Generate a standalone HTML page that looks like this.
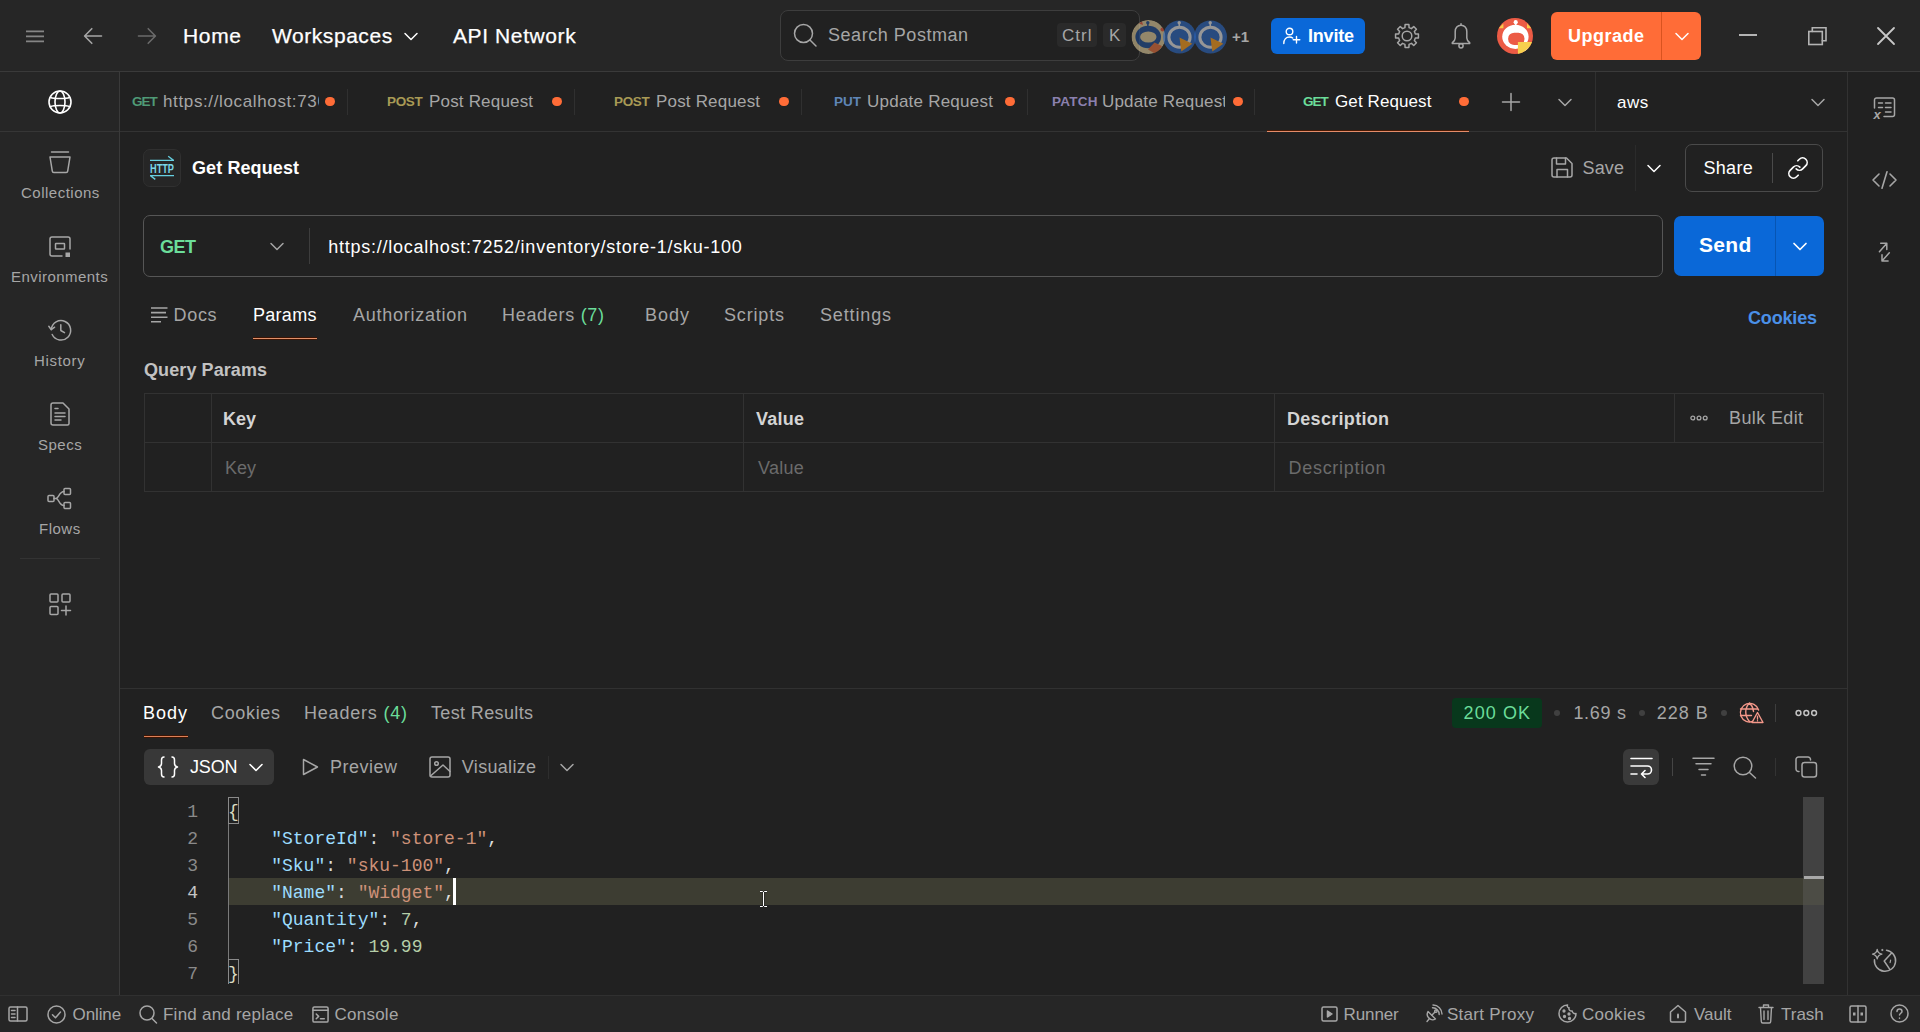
<!DOCTYPE html>
<html lang="en">
<head>
<meta charset="utf-8">
<title>Postman - Get Request</title>
<style>
*{box-sizing:border-box;margin:0;padding:0}
html,body{width:1920px;height:1032px;overflow:hidden;background:#212121}
body{position:relative;font-family:"Liberation Sans",Arial,sans-serif;font-size:18px;color:#a6a6a6;-webkit-font-smoothing:antialiased}
.abs,.t,.ic,.box,.ln{position:absolute}
.t{white-space:nowrap;line-height:24px;height:24px}
.w{color:#fff}
.b{font-weight:700}
.g{color:#a6a6a6}
.ic{display:block;overflow:visible}
svg{fill:none;stroke:#a6a6a6;stroke-width:1.5;stroke-linecap:round;stroke-linejoin:round}
.ln{background:#353535}
#topbar{left:0;top:0;width:1920px;height:72px;background:#262626;border-bottom:1px solid #3a3a3a}
#sidebar{left:0;top:72px;width:120px;height:923px;background:#262626;border-right:1px solid #3a3a3a}
#tabbar{left:120px;top:72px;width:1727px;height:60px;background:#212121;border-bottom:1px solid #333}
#rightbar{left:1847px;top:72px;width:73px;height:923px;background:#212121;border-left:1px solid #323232}
#statusbar{left:0;top:995px;width:1920px;height:37px;background:#262626;border-top:1px solid #303030}
#main{left:120px;top:132px;width:1727px;height:863px;background:#212121}
.dot{position:absolute;width:9.6px;height:9.6px;border-radius:50%;background:#ff6c37}
.tabsep{position:absolute;top:89px;width:1px;height:26px;background:#303030}
.mono{transform:translateY(1.6px);font-family:"Liberation Mono","DejaVu Sans Mono",monospace;font-size:18px;line-height:27px;height:27px;white-space:pre;position:absolute}
.key{color:#9cdcfe}.str{color:#ce9178}.num{color:#b5cea8}.pun{color:#dcdcdc}
.lnum{transform:translateY(1.6px);position:absolute;width:60px;text-align:right;font-family:"Liberation Mono","DejaVu Sans Mono",monospace;font-size:18px;line-height:27px;color:#8a8a8a}
</style>
</head>
<body>
<!-- ================= TOP BAR ================= -->
<header id="topbar" class="abs">
  <svg class="ic" style="left:26px;top:28px;stroke:#858585;stroke-width:1.6" width="18" height="16" viewBox="0 0 18 16"><path d="M0 3.4h18M0 8.4h18M0 13.4h18" stroke-linecap="butt"/></svg>
  <svg class="ic" style="left:83px;top:27px;stroke:#a6a6a6;stroke-width:1.6" width="20" height="18" viewBox="0 0 20 18"><path d="M18.500 9H2M8.800 1.700L1.600 9l7.200 7.300"/></svg>
  <svg class="ic" style="left:137px;top:27px;stroke:#6b6b6b;stroke-width:1.6" width="20" height="18" viewBox="0 0 20 18"><path d="M1.500 9H18M11.200 1.700L18.400 9l-7.200 7.300"/></svg>
  <span class="t w" id="home" style="left:183px;top:24px;font-size:21px;letter-spacing:0.667px;-webkit-text-stroke:0.25px #fff">Home</span>
  <span class="t w" id="workspaces" style="left:272px;top:24px;font-size:21px;letter-spacing:0.556px;-webkit-text-stroke:0.25px #fff">Workspaces</span>
  <svg class="ic" style="left:404px;top:32px;stroke:#fff" width="14" height="9" viewBox="0 0 14 9"><path d="M1 1.5l6 6 6-6"/></svg>
  <span class="t w" id="apinet" style="left:453px;top:24px;font-size:21px;letter-spacing:0.6px;-webkit-text-stroke:0.25px #fff">API Network</span>

  <div class="box" id="search" style="left:780px;top:10px;width:360px;height:51px;border:1px solid #3d3d3d;border-radius:8px;background:#212121"></div>
  <svg class="ic" style="left:793px;top:23px;stroke:#a6a6a6" width="24" height="24" viewBox="0 0 24 24"><circle cx="10.5" cy="10.5" r="9"/><path d="M17 17l6 6"/></svg>
  <span class="t g" id="searchtxt" style="left:828px;top:23px;letter-spacing:0.538px">Search Postman</span>
  <div class="box" style="left:1057px;top:23px;width:40px;height:24px;border-radius:4px;background:#2a2a2a"></div>
  <span class="t g" id="ctrl" style="left:1062px;top:24px;font-size:17px;letter-spacing:1px">Ctrl</span>
  <div class="box" style="left:1103px;top:23px;width:23px;height:24px;border-radius:4px;background:#2a2a2a"></div>
  <span class="t g" id="kk" style="left:1109px;top:24px;font-size:17px">K</span>

  <!-- team avatars -->
  <svg class="ic" style="left:1131px;top:19px;stroke:none" width="98" height="36" viewBox="0 0 98 36">
    <defs><clipPath id="tav1"><circle cx="17.500" cy="18" r="17"/></clipPath></defs>
    <g opacity="0.58" clip-path="url(#tav1)">
      <circle cx="17.500" cy="18" r="17" fill="#e2cd9c"/>
      <path d="M8 4.500l3-2 1 3.500z" fill="#e8573c"/><circle cx="31.500" cy="10.500" r="2" fill="#e8573c"/>
      <ellipse cx="17.200" cy="18" rx="12.800" ry="11.300" fill="#1f4f96"/>
      <ellipse cx="17.300" cy="18" rx="8.200" ry="5.600" fill="#e2cd9c"/>
      <rect x="16.100" y="3.500" width="1.500" height="4" fill="#1f4f96"/><circle cx="16.800" cy="3.700" r="1.700" fill="#1f4f96"/>
      <path d="M23.500 23.500l7.500 3.500-5.500 8.500-8.500-5z" fill="#e8703c"/>
    </g>
    <g opacity="0.58">
      <circle cx="48.500" cy="18" r="16.500" fill="#2b66c0"/>
      <ellipse cx="48.500" cy="18.200" rx="10.600" ry="10" fill="none" stroke="#e8e8e8" stroke-width="3"/>
      <rect x="47.500" y="4" width="1.500" height="4" fill="#e8e8e8"/><circle cx="48.200" cy="3.800" r="1.700" fill="#e8e8e8"/>
      <path d="M48.500 18.600l12.800 6.200-11 7.700z" fill="#ff9f1c"/>
    </g>
    <g opacity="0.58">
      <circle cx="79.500" cy="18" r="16.500" fill="#2b66c0"/>
      <ellipse cx="79.500" cy="18.200" rx="10.600" ry="10" fill="none" stroke="#e8e8e8" stroke-width="3"/>
      <rect x="78.500" y="4" width="1.500" height="4" fill="#e8e8e8"/><circle cx="79.200" cy="3.800" r="1.700" fill="#e8e8e8"/>
      <path d="M79.500 18.600l12.800 6.200-11 7.700z" fill="#ff9f1c"/>
    </g>
  </svg>
  <span class="t b" id="plus1" style="left:1232px;top:25px;font-size:15px;color:#a6a6a6">+1</span>

  <div class="box" id="invite" style="left:1271px;top:18px;width:94px;height:36px;border-radius:6px;background:#0a68d8"></div>
  <svg class="ic" style="left:1283px;top:27px;stroke:#fff;stroke-width:1.4" width="18" height="18" viewBox="0 0 18 18"><circle cx="6.5" cy="4.5" r="3.3"/><path d="M0.8 16.5c0-4 2.4-6.5 5.7-6.5 1.2 0 2.3.3 3.2 1M13.5 9.5v6.5M10.2 12.8h6.6"/></svg>
  <span class="t w b" id="invitetxt" style="left:1308px;top:24px;letter-spacing:-0.2px">Invite</span>

  <!-- settings -->
  <svg class="ic" style="left:1394px;top:23px;stroke:#a6a6a6;stroke-width:1.5" width="26" height="26" viewBox="0 0 26 26"><circle cx="13" cy="13" r="4.800"/><path d="M10.93 4.65 L11.10 1.56 L14.90 1.56 L15.07 4.65 L17.44 5.63 L19.74 3.56 L22.44 6.26 L20.37 8.56 L21.35 10.93 L24.44 11.10 L24.44 14.90 L21.35 15.07 L20.37 17.44 L22.44 19.74 L19.74 22.44 L17.44 20.37 L15.07 21.35 L14.90 24.44 L11.10 24.44 L10.93 21.35 L8.56 20.37 L6.26 22.44 L3.56 19.74 L5.63 17.44 L4.65 15.07 L1.56 14.90 L1.56 11.10 L4.65 10.93 L5.63 8.56 L3.56 6.26 L6.26 3.56 L8.56 5.63Z"/></svg>
  <!-- bell -->
  <svg class="ic" style="left:1450px;top:23px;stroke:#a6a6a6;stroke-width:1.5" width="22" height="26" viewBox="0 0 22 26"><path d="M11 2.300c-3.600 0-5.800 2.600-5.800 6.200v6.500c0 1.600-1.200 3.200-2.800 4.600a.5.500 0 00.300.9h16.600a.5.500 0 00.300-.9c-1.600-1.400-2.800-3-2.800-4.600V8.500c0-3.600-2.200-6.200-5.800-6.200z"/><circle cx="11" cy="22.800" r="2.100"/><path d="M11 0.800v1.500"/></svg>
  <!-- user avatar -->
  <svg class="ic" style="left:1497px;top:18px;stroke:none" width="36" height="36" viewBox="0 0 36 36">
    <defs><clipPath id="avc"><circle cx="18" cy="18" r="18"/></clipPath></defs>
    <g clip-path="url(#avc)">
      <rect width="36" height="36" fill="#ec5b45"/>
      <path d="M1.500 10.200L6.400 5.400V10.200z" fill="#f7c948"/><path d="M30 5.600l4.600 4.600H30z" fill="#f7c948"/>
      <ellipse cx="18.400" cy="18.800" rx="13.200" ry="12.100" fill="#fff"/>
      <rect x="17.900" y="4" width="1.600" height="4" fill="#fff"/>
      <circle cx="18.700" cy="4.200" r="2.100" fill="#fff"/>
      <rect x="11.200" y="14.700" width="16.200" height="12.200" rx="6" ry="5.500" fill="#ec5b45"/>
      <rect x="20.900" y="24" width="16" height="13" fill="#f7d04e"/>
      <path d="M36 26L24 36h12z" fill="#fbe9a6"/>
    </g>
  </svg>
  <!-- upgrade -->
  <div class="box" id="upgrade" style="left:1551px;top:12px;width:150px;height:48px;border-radius:6px;background:#ff6c37"></div>
  <div class="ln" style="left:1661px;top:12px;width:1px;height:48px;background:#d9531f"></div>
  <span class="t w b" id="upgradetxt" style="left:1568px;top:24px;letter-spacing:0.5px">Upgrade</span>
  <svg class="ic" style="left:1675px;top:32px;stroke:#fff" width="14" height="9" viewBox="0 0 14 9"><path d="M1 1.500l6 6 6-6"/></svg>
  <!-- window controls -->
  <div class="ln" style="left:1739px;top:34px;width:18px;height:2px;background:#b4b4b4"></div>
  <svg class="ic" style="left:1807px;top:26px;stroke:#b4b4b4;stroke-width:1.600;stroke-linejoin:miter" width="20" height="20" viewBox="0 0 20 20"><rect x="1.800" y="5.500" width="13.500" height="13"/><path d="M5.300 5.500V1.800H19v13h-3.700"/></svg>
  <svg class="ic" style="left:1877px;top:27px;stroke:#c8c8c8;stroke-width:1.800" width="18" height="18" viewBox="0 0 18 18"><path d="M1 1l16 16M17 1L1 17"/></svg>
</header>
<!-- ================= LEFT SIDEBAR ================= -->
<nav id="sidebar" class="abs"></nav>
<div class="ln" style="left:0;top:131px;width:119px;height:1px;background:#363636"></div>
<!-- workspace globe -->
<svg class="ic" style="left:48px;top:90px;stroke:#fff;stroke-width:1.600" width="24" height="24" viewBox="0 0 24 24"><circle cx="12" cy="12" r="11"/><ellipse cx="12" cy="12" rx="5" ry="11"/><path d="M2.500 7.500c3 1.400 16 1.400 19 0M2.500 16.500c3-1.400 16-1.400 19 0"/></svg>
<!-- collections -->
<svg class="ic" style="left:49px;top:150px" width="22" height="24" viewBox="0 0 22 24"><path d="M2.500 2h17M1 7h20l-2.300 14.200a1.500 1.500 0 01-1.500 1.300H4.800a1.500 1.500 0 01-1.500-1.300z"/></svg>
<span class="t g" id="sbcoll" style="left:21px;top:181px;font-size:15px;letter-spacing:0.5px">Collections</span>
<!-- environments -->
<svg class="ic" style="left:49px;top:236px" width="22" height="22" viewBox="0 0 22 22"><path d="M13 20H3a2 2 0 01-2-2V3a2 2 0 012-2h16a2 2 0 012 2v10"/><rect x="6.500" y="7.500" width="9" height="5.500" rx="0.500"/><rect x="16.500" y="16.500" width="4.500" height="4.500" fill="#a6a6a6" stroke="none"/></svg>
<span class="t g" id="sbenv" style="left:11px;top:265px;font-size:15px;letter-spacing:0.455px">Environments</span>
<!-- history -->
<svg class="ic" style="left:48px;top:318px" width="24" height="24" viewBox="0 0 24 24"><path d="M3.300 11.500a9.700 9.700 0 11.900 5"/><path d="M.800 8.300l2.500 3.400 3.300-2.500"/><path d="M12.800 6.800v5.700l3.700 2.200"/></svg>
<span class="t g" id="sbhist" style="left:34px;top:349px;font-size:15px;letter-spacing:0.667px">History</span>
<!-- specs -->
<svg class="ic" style="left:50px;top:402px" width="20" height="24" viewBox="0 0 20 24"><path d="M3 1h10l6 6v14.500a1.500 1.500 0 01-1.500 1.500H3a2 2 0 01-2-2V3a2 2 0 012-2z"/><path d="M5 6.500h3M5 11h10M5 14.500h10M5 18h6"/></svg>
<span class="t g" id="sbspecs" style="left:38px;top:433px;font-size:15px;letter-spacing:0.5px">Specs</span>
<!-- flows -->
<svg class="ic" style="left:47px;top:487px" width="25" height="23" viewBox="0 0 25 23"><rect x="1" y="8.500" width="6" height="6" rx="1"/><rect x="17" y="1.500" width="6.500" height="6" rx="1"/><rect x="17" y="15.500" width="6.500" height="6" rx="1"/><path d="M7 11.500h2c3 0 3-7 8-7M9 11.500c3 0 3 7 8 7"/></svg>
<span class="t g" id="sbflows" style="left:39px;top:517px;font-size:15px;letter-spacing:0.5px">Flows</span>
<div class="ln" style="left:20px;top:558px;width:80px;height:1px;background:#333"></div>
<!-- add apps -->
<svg class="ic" style="left:49px;top:593px" width="23" height="23" viewBox="0 0 23 23"><rect x="1" y="1" width="8" height="8" rx="1"/><rect x="13" y="1" width="8" height="8" rx="1"/><rect x="1" y="13.500" width="8" height="8" rx="1"/><path d="M17 13v9M12.500 17.500h9"/></svg>

<!-- ================= TAB BAR ================= -->
<div id="tabbar" class="abs"></div>
<span class="t b" id="t1m" style="left:132px;top:90px;font-size:13.500px;color:#4f9a76;letter-spacing:-1px">GET</span>
<span class="t" id="t1n" style="left:163px;top:90px;font-size:17px;color:#a6a6a6;width:156px;overflow:hidden;letter-spacing:0.632px">https://localhost:7308</span>
<div class="dot" style="left:325px;top:96.600px"></div>
<div class="tabsep" style="left:347px"></div>

<span class="t b" id="t2m" style="left:387px;top:90px;font-size:13.500px;color:#a89a55;letter-spacing:-0.333px">POST</span>
<span class="t" id="t2n" style="left:429px;top:90px;font-size:17px;color:#a6a6a6;letter-spacing:0.182px">Post Request</span>
<div class="dot" style="left:552px;top:96.600px"></div>
<div class="tabsep" style="left:574px"></div>

<span class="t b" id="t3m" style="left:614px;top:90px;font-size:13.500px;color:#a89a55;letter-spacing:-0.333px">POST</span>
<span class="t" id="t3n" style="left:656px;top:90px;font-size:17px;color:#a6a6a6;letter-spacing:0.182px">Post Request</span>
<div class="dot" style="left:779px;top:96.600px"></div>
<div class="tabsep" style="left:801px"></div>

<span class="t b" id="t4m" style="left:834px;top:90px;font-size:13.500px;color:#5f86b8;letter-spacing:0px">PUT</span>
<span class="t" id="t4n" style="left:867px;top:90px;font-size:17px;color:#a6a6a6;letter-spacing:0.231px">Update Request</span>
<div class="dot" style="left:1005px;top:96.600px"></div>
<div class="tabsep" style="left:1027px"></div>

<span class="t b" id="t5m" style="left:1052px;top:90px;font-size:13.500px;color:#8b80ae;letter-spacing:0.25px">PATCH</span>
<span class="t" id="t5n" style="left:1102px;top:90px;font-size:17px;color:#a6a6a6;width:123px;overflow:hidden;letter-spacing:0.167px">Update Request</span>
<div class="dot" style="left:1233px;top:96.600px"></div>
<div class="tabsep" style="left:1254px"></div>

<span class="t b" id="t6m" style="left:1303px;top:90px;font-size:13.500px;color:#6bdd9a;letter-spacing:-1px">GET</span>
<span class="t w" id="t6n" style="left:1335px;top:90px;font-size:17px;letter-spacing:0.1px">Get Request</span>
<div class="dot" style="left:1459px;top:96.600px"></div>
<div class="ln" style="left:1267px;top:130px;width:202px;height:1px;background:#4a1a04"></div>
<div class="ln" style="left:1267px;top:131px;width:202px;height:1px;background:#e58c69"></div>

<svg class="ic" style="left:1502px;top:93px;stroke:#a6a6a6" width="18" height="18" viewBox="0 0 18 18"><path d="M9 0.500v17M0.500 9h17"/></svg>
<svg class="ic" style="left:1558px;top:98px;stroke:#a6a6a6" width="14" height="9" viewBox="0 0 14 9"><path d="M1 1.500l6 6 6-6"/></svg>
<div class="ln" style="left:1595px;top:72px;width:1px;height:60px;background:#303030"></div>
<span class="t w" id="aws" style="left:1617px;top:91px;font-size:17px;letter-spacing:0.5px">aws</span>
<svg class="ic" style="left:1811px;top:98px;stroke:#a6a6a6" width="14" height="9" viewBox="0 0 14 9"><path d="M1 1.500l6 6 6-6"/></svg>

<!-- ================= RIGHT SIDEBAR ================= -->
<aside id="rightbar" class="abs"></aside>
<svg class="ic" style="left:1873px;top:97px;stroke:#a6a6a6" width="23" height="24" viewBox="0 0 23 24"><path d="M1.500 11V3a2 2 0 012-2h16a2 2 0 012 2v14.500a2 2 0 01-2 2H11"/><path d="M5.500 6h4M12.500 6h5.500M5.500 10.500h4M12.500 10.500h5.500M12.500 15h5.500"/><text x="0.500" y="21.500" font-family="Liberation Sans, Arial, sans-serif" font-size="13" font-style="italic" font-weight="700" fill="#a6a6a6" stroke="none">x</text></svg>
<svg class="ic" style="left:1872px;top:171px;stroke:#a6a6a6;stroke-width:1.600" width="25" height="18" viewBox="0 0 25 18"><path d="M7 3L1 9l6 6M18 3l6 6-6 6M15 0.800l-5 16.400"/></svg>
<svg class="ic" style="left:1875px;top:240px;stroke:#a6a6a6;stroke-width:1.500" width="19" height="24" viewBox="0 0 19 24"><path d="M4.400 11.800L11.700 3.500M5.700 3.300h6.100v6.100"/><path d="M14.300 12.800L7 21M7 14.800v6.100h6.100"/></svg>
<svg class="ic" style="left:1873px;top:948px;stroke:#a6a6a6;stroke-width:1.500" width="24" height="24" viewBox="0 0 24 24"><path d="M13.48 2.20A10.6 10.6 0 1 1 1.44 11.78"/><path d="M4.200 1.300Q4.900 5.400 8.900 6.100Q4.900 6.800 4.200 10.900Q3.500 6.800-.500 6.100Q3.500 5.400 4.200 1.300Z" stroke-width="1.300"/><path d="M9.300 1.300v1.400M8.600 2h1.400" stroke-width="1"/><path d="M18.400 5.300L11.200 13l5.600 8.300"/><path d="M17.600 12.200l-.500 2.400" stroke-width="1.200"/></svg>
<!-- ================= MAIN: REQUEST ================= -->
<main id="main" class="abs"></main>
<div class="box" style="left:143px;top:149px;width:38px;height:38px;border-radius:7px;background:#262626;border:1px solid #303030"></div>
<svg class="ic" style="left:149px;top:155px;stroke:#66cfe0;stroke-width:1.400;stroke-linecap:butt" width="26" height="26" viewBox="0 0 26 26">
  <path d="M1 5.400h24M19.200 1.300l5.300 4"/>
  <path d="M25 20.600H1M6.300 24.400L1.500 20.700"/>
  <text x="13" y="17.600" text-anchor="middle" font-family="Liberation Sans, Arial, sans-serif" font-size="12.500" font-weight="700" textLength="24" lengthAdjust="spacingAndGlyphs" fill="#7ad6e6" stroke="none">HTTP</text>
</svg>
<span class="t w b" id="reqname" style="left:192px;top:156px;letter-spacing:0.1px">Get Request</span>

<svg class="ic" style="left:1551px;top:157px;stroke:#a6a6a6;stroke-width:1.500" width="22" height="21" viewBox="0 0 22 21"><path d="M1 3a2 2 0 012-2h12.500l5.500 5.500V18a2 2 0 01-2 2H3a2 2 0 01-2-2z"/><path d="M5.500 1v6h9V1M6 20v-7.500h10.500V20"/></svg>
<span class="t g" id="save" style="left:1582.5px;top:156px;letter-spacing:0.167px">Save</span>
<div class="ln" style="left:1635px;top:145px;width:1px;height:46px;background:#2b2b2b"></div>
<svg class="ic" style="left:1647px;top:164px;stroke:#fff" width="14" height="9" viewBox="0 0 14 9"><path d="M1 1.500l6 6 6-6"/></svg>
<div class="box" style="left:1685px;top:144px;width:138px;height:48px;border:1px solid #4a4a4a;border-radius:7px"></div>
<span class="t w" id="share" style="left:1703.5px;top:156px;letter-spacing:0.3px">Share</span>
<div class="ln" style="left:1772px;top:153px;width:1px;height:30px;background:#4a4a4a"></div>
<svg class="ic" style="left:1787px;top:157px;stroke:#fff;stroke-width:1.800" width="22" height="22" viewBox="0 0 24 24"><path d="M10 13a5 5 0 007.070 0l3.500-3.500a5 5 0 00-7.070-7.070l-1.700 1.700"/><path d="M14 11a5 5 0 00-7.070 0l-3.500 3.500a5 5 0 007.070 7.070l1.700-1.700"/></svg>

<!-- URL bar -->
<div class="box" style="left:143px;top:215px;width:1520px;height:62px;border:1px solid #565656;border-radius:7px;background:#212121"></div>
<span class="t b" id="method" style="left:160px;top:235px;color:#6bdd9a;letter-spacing:-0.5px">GET</span>
<svg class="ic" style="left:270px;top:242px;stroke:#a6a6a6" width="14" height="9" viewBox="0 0 14 9"><path d="M1 1.500l6 6 6-6"/></svg>
<div class="ln" style="left:309px;top:228px;width:1px;height:36px;background:#3d3d3d"></div>
<span class="t w" id="url" style="left:328.2px;top:235px;letter-spacing:0.753px">https://localhost:7252/inventory/store-1/sku-100</span>
<div class="box" style="left:1674px;top:216px;width:150px;height:60px;border-radius:7px;background:#0a68d8"></div>
<div class="ln" style="left:1775px;top:216px;width:1px;height:60px;background:#0755b3"></div>
<span class="t w b" id="send" style="left:1699px;top:233px;font-size:21px;letter-spacing:0.333px">Send</span>
<svg class="ic" style="left:1793px;top:242px;stroke:#fff;stroke-width:1.700" width="14" height="9" viewBox="0 0 14 9"><path d="M1 1.500l6 6 6-6"/></svg>

<!-- request tabs -->
<svg class="ic" style="left:151px;top:307px;stroke:#a6a6a6;stroke-width:1.600;stroke-linecap:butt" width="17" height="16" viewBox="0 0 17 16"><path d="M0 1h16.500M0 5.600h15M0 10.200h16.500M0 14.800h10"/></svg>
<span class="t g" id="docs" style="left:173.6px;top:303px;letter-spacing:0.667px">Docs</span>
<span class="t w" id="params" style="left:253px;top:303px;letter-spacing:0.28px">Params</span>
<div class="ln" style="left:253px;top:337px;width:64px;height:3px;background:#3d1504"></div><div class="ln" style="left:253px;top:338px;width:64px;height:1px;background:#e0906a"></div>
<span class="t g" id="auth" style="left:353px;top:303px;letter-spacing:0.75px">Authorization</span>
<span class="t g" id="hdrs" style="left:502px;top:303px;letter-spacing:0.7px">Headers <span style="color:#6bdd9a">(7)</span></span>
<span class="t g" id="body" style="left:645px;top:303px;letter-spacing:1px">Body</span>
<span class="t g" id="scripts" style="left:724px;top:303px;letter-spacing:0.833px">Scripts</span>
<span class="t g" id="settings" style="left:820px;top:303px;letter-spacing:0.857px">Settings</span>
<span class="t b" id="cookieslink" style="left:1748px;top:306px;color:#4a90e8;letter-spacing:-0.167px">Cookies</span>

<span class="t b" id="qp" style="left:144px;top:358px;color:#c2c2c2;letter-spacing:0.091px">Query Params</span>

<!-- params table -->
<div class="box" id="ptable" style="left:144px;top:393px;width:1680px;height:99px;border:1px solid #323232"></div>
<div class="ln" style="left:144px;top:442px;width:1680px;height:1px;background:#323232"></div>
<div class="ln" style="left:211px;top:393px;width:1px;height:99px;background:#323232"></div>
<div class="ln" style="left:743px;top:393px;width:1px;height:99px;background:#323232"></div>
<div class="ln" style="left:1274px;top:393px;width:1px;height:99px;background:#323232"></div>
<div class="ln" style="left:1674px;top:393px;width:1px;height:49px;background:#323232"></div>
<span class="t b" id="thkey" style="left:223px;top:407px;color:#d4d4d4;letter-spacing:0px">Key</span>
<span class="t b" id="thval" style="left:756px;top:407px;color:#d4d4d4;letter-spacing:0.25px">Value</span>
<span class="t b" id="thdesc" style="left:1287px;top:407px;color:#d4d4d4;letter-spacing:0.3px">Description</span>
<svg class="ic" style="left:1690px;top:415px;stroke:#a6a6a6;stroke-width:1.300" width="18" height="6" viewBox="0 0 18 6"><circle cx="2.800" cy="3" r="1.900"/><circle cx="9" cy="3" r="1.900"/><circle cx="15.200" cy="3" r="1.900"/></svg>
<span class="t g" id="bulk" style="left:1729px;top:406px;letter-spacing:0.375px">Bulk Edit</span>
<span class="t" id="phkey" style="left:225px;top:456px;color:#6b6b6b;letter-spacing:0px">Key</span>
<span class="t" id="phval" style="left:758px;top:456px;color:#6b6b6b;letter-spacing:0.25px">Value</span>
<span class="t" id="phdesc" style="left:1288.6px;top:456px;color:#6b6b6b;letter-spacing:0.69px">Description</span>
<!-- ================= RESPONSE ================= -->
<div class="ln" style="left:120px;top:688px;width:1727px;height:1px;background:#313131"></div>
<span class="t w" id="rbody" style="left:143px;top:701px;letter-spacing:1px">Body</span>
<div class="ln" style="left:144px;top:735px;width:44px;height:3px;background:#3d1504"></div><div class="ln" style="left:144px;top:736px;width:44px;height:1px;background:#dc8058"></div>
<span class="t g" id="rcookies" style="left:211px;top:701px;letter-spacing:0.667px">Cookies</span>
<span class="t g" id="rhdrs" style="left:304px;top:701px;letter-spacing:0.8px">Headers <span style="color:#6bdd9a">(4)</span></span>
<span class="t g" id="rtests" style="left:431px;top:701px;letter-spacing:0.364px">Test Results</span>

<div class="box" style="left:1452px;top:698px;width:90px;height:30px;border-radius:4px;background:#08381c"></div>
<span class="t" id="ok200" style="left:1463.6px;top:701px;color:#6bdd9a;letter-spacing:1.08px">200 OK</span>
<div class="dot" style="left:1554px;top:710px;width:6px;height:6px;background:#404040"></div>
<span class="t g" id="rtime" style="left:1573.4px;top:701px;letter-spacing:0.72px">1.69 s</span>
<div class="dot" style="left:1639px;top:710px;width:6px;height:6px;background:#404040"></div>
<span class="t g" id="rsize" style="left:1656.7px;top:701px;letter-spacing:1px">228 B</span>
<div class="dot" style="left:1721px;top:710px;width:6px;height:6px;background:#404040"></div>
<svg class="ic" style="left:1739px;top:702px;stroke:#f4988a;stroke-width:1.400" width="25" height="22" viewBox="0 0 25 22"><path d="M14.500 19.200A9.300 9.300 0 1119.600 8"/><path d="M10.500 1c-5 5-5 13 0 18.500M10.500 1c2.500 2.500 3.800 5.500 4 8.500M1.500 7h17M1.500 13.500h11"/><path d="M18.500 10.500l5.500 10H13z" fill="#212121" stroke="#f4988a" stroke-width="1.400"/><path d="M18.500 14.200v3M18.500 18.700v.2" stroke="#f4988a" stroke-width="1.300"/></svg>
<div class="ln" style="left:1775px;top:704px;width:1px;height:18px;background:#3d3d3d"></div>
<svg class="ic" style="left:1795px;top:709px;stroke:#c4c4c4;stroke-width:1.500" width="23" height="8" viewBox="0 0 23 8"><circle cx="3.500" cy="4" r="2.400"/><circle cx="11.300" cy="4" r="2.400"/><circle cx="19.100" cy="4" r="2.400"/></svg>

<!-- format toolbar -->
<div class="box" style="left:144px;top:749px;width:130px;height:36px;border-radius:6px;background:#383838"></div>
<svg class="ic" style="left:157px;top:756px;stroke:#fff;stroke-width:1.500" width="22" height="22" viewBox="0 0 22 22"><path d="M7 1C4.500 1 4.500 2.500 4.500 4v3.500c0 2-1 3-3 3.500 2 .500 3 1.500 3 3.500V18c0 1.500 0 3 2.500 3M15 1c2.500 0 2.500 1.500 2.500 3v3.500c0 2 1 3 3 3.500-2 .500-3 1.500-3 3.500V18c0 1.500 0 3-2.500 3"/></svg>
<span class="t w" id="json" style="left:190px;top:755px;letter-spacing:-0.133px">JSON</span>
<svg class="ic" style="left:249px;top:763px;stroke:#fff;stroke-width:1.600" width="14" height="9" viewBox="0 0 14 9"><path d="M1 1.500l6 6 6-6"/></svg>
<svg class="ic" style="left:302px;top:758px;stroke:#a6a6a6;stroke-width:1.500" width="17" height="18" viewBox="0 0 17 18"><path d="M1.500 1.500v15L15.500 9z"/></svg>
<span class="t g" id="preview" style="left:330px;top:755px;letter-spacing:0.5px">Preview</span>
<svg class="ic" style="left:429px;top:756px;stroke:#a6a6a6;stroke-width:1.500" width="22" height="22" viewBox="0 0 22 22"><rect x="1" y="1" width="20" height="20" rx="2"/><circle cx="7.500" cy="7.500" r="1.800"/><path d="M1.500 20L14 9l7 6.500"/></svg>
<span class="t g" id="visualize" style="left:461.8px;top:755px;letter-spacing:0.325px">Visualize</span>
<div class="ln" style="left:548px;top:756px;width:1px;height:23px;background:#2e2e2e"></div>
<svg class="ic" style="left:560px;top:763px;stroke:#a6a6a6;stroke-width:1.500" width="14" height="9" viewBox="0 0 14 9"><path d="M1 1.500l6 6 6-6"/></svg>

<div class="box" style="left:1623px;top:749px;width:36px;height:36px;border-radius:6px;background:#3a3a3a"></div>
<svg class="ic" style="left:1630px;top:757px;stroke:#fff;stroke-width:1.600" width="23" height="21" viewBox="0 0 23 21"><path d="M1 1.500h21M1 9h16.500a4 4 0 010 8H12M1 17h6M15 13.500L11.500 17l3.500 3.500" /></svg>
<div class="ln" style="left:1672px;top:758px;width:1px;height:18px;background:#454545"></div>
<svg class="ic" style="left:1692px;top:757px;stroke:#a6a6a6;stroke-width:1.500" width="23" height="19" viewBox="0 0 23 19"><path d="M1 1.200h21M4 6.800h15M7 12.400h9M9.500 18h4"/></svg>
<svg class="ic" style="left:1733px;top:756px;stroke:#a6a6a6;stroke-width:1.500" width="24" height="23" viewBox="0 0 24 23"><circle cx="10" cy="10" r="8.800"/><path d="M16.500 16.500l6 5.500"/></svg>
<div class="ln" style="left:1775px;top:758px;width:1px;height:18px;background:#333"></div>
<svg class="ic" style="left:1795px;top:756px;stroke:#a6a6a6;stroke-width:1.500" width="23" height="22" viewBox="0 0 23 22"><rect x="7" y="6.500" width="14.500" height="14.500" rx="2.500"/><path d="M4 15.500H3.500A2.500 2.500 0 011 13V3.500A2.500 2.500 0 013.500 1H13a2.500 2.500 0 012.500 2.500V4"/></svg>

<!-- code viewer -->
<div class="box" style="left:229px;top:878px;width:1574px;height:27px;background:#3d3d32"></div>
<div class="ln" style="left:228px;top:797px;width:1px;height:187px;background:#7a7a7a"></div>
<div class="box" style="left:228px;top:797px;width:11px;height:27px;border:1px solid #8a8a8a"></div>
<div class="box" style="left:228px;top:959px;width:11px;height:25px;border:1px solid #8a8a8a;border-bottom:none"></div>
<div class="lnum" style="left:138px;top:797px">1</div>
<div class="lnum" style="left:138px;top:824px">2</div>
<div class="lnum" style="left:138px;top:851px">3</div>
<div class="lnum" style="left:138px;top:878px;color:#c6c6c6">4</div>
<div class="lnum" style="left:138px;top:905px">5</div>
<div class="lnum" style="left:138px;top:932px">6</div>
<div class="lnum" style="left:138px;top:959px">7</div>
<div class="mono" style="left:228px;top:797px"><span style="color:#dadac0">{</span></div>
<div class="mono" style="left:228px;top:824px">    <span class="key">"StoreId"</span><span class="pun">: </span><span class="str">"store-1"</span><span class="pun">,</span></div>
<div class="mono" style="left:228px;top:851px">    <span class="key">"Sku"</span><span class="pun">: </span><span class="str">"sku-100"</span><span class="pun">,</span></div>
<div class="mono" style="left:228px;top:878px">    <span class="key">"Name"</span><span class="pun">: </span><span class="str">"Widget"</span><span class="pun">,</span></div>
<div class="mono" style="left:228px;top:905px">    <span class="key">"Quantity"</span><span class="pun">: </span><span class="num">7</span><span class="pun">,</span></div>
<div class="mono" style="left:228px;top:932px">    <span class="key">"Price"</span><span class="pun">: </span><span class="num">19.99</span></div>
<div class="mono" style="left:228px;top:959px"><span style="color:#dadac0">}</span></div>
<div class="box" style="left:453px;top:878px;width:3px;height:27px;background:#fff"></div>
<!-- mouse I-beam -->
<svg class="ic" style="left:760px;top:890px;stroke:#fff;stroke-width:1;stroke-linecap:butt" width="7" height="18" viewBox="0 0 7 18"><path d="M0 1.500h2.800M4.200 1.500H7M3.500 1.500v15M0 16.500h2.800M4.200 16.500H7" stroke="#222" stroke-width="2.200"/><path d="M0 1.500h2.800M4.200 1.500H7M3.500 2v14M0 16.500h2.800M4.200 16.500H7"/></svg>
<!-- scrollbar / overview ruler -->
<div class="box" style="left:1803px;top:797px;width:21px;height:187px;background:#424242"></div>
<div class="box" style="left:1803px;top:878px;width:21px;height:27px;background:#4c4c45"></div>
<div class="box" style="left:1804px;top:876px;width:20px;height:3px;background:#a8a8a8"></div>

<!-- ================= STATUS BAR ================= -->
<footer id="statusbar" class="abs"></footer>
<svg class="ic" style="left:8px;top:1006px;stroke:#a6a6a6;stroke-width:1.500" width="20" height="16" viewBox="0 0 20 16"><rect x="1" y="1" width="18" height="14" rx="1.500"/><path d="M9.500 1v14M3.500 4.500h3.500M3.500 8h3.500M3.500 11.500h3.500"/></svg>
<svg class="ic" style="left:47px;top:1005px;stroke:#a6a6a6;stroke-width:1.500" width="19" height="19" viewBox="0 0 19 19"><circle cx="9.500" cy="9.500" r="8.500"/><path d="M5.500 9.800l3 3 5-5.800"/></svg>
<span class="t g" id="online" style="left:72.6px;top:1003px;font-size:17px;letter-spacing:-0.12px">Online</span>
<svg class="ic" style="left:139px;top:1005px;stroke:#a6a6a6;stroke-width:1.500" width="18" height="19" viewBox="0 0 18 19"><circle cx="8" cy="8" r="7"/><path d="M13 13.500l4.500 4.500"/></svg>
<span class="t g" id="find" style="left:163px;top:1003px;font-size:17px;letter-spacing:0.233px">Find and replace</span>
<svg class="ic" style="left:311.500px;top:1005.500px;stroke:#a6a6a6;stroke-width:1.600" width="17" height="17" viewBox="0 0 18 18"><rect x="1" y="1" width="16" height="16" rx="1.500"/><path d="M1 4.500h16M4.500 8.500l2.500 2.500-2.500 2.500M9 13.500h4"/></svg>
<span class="t g" id="console" style="left:334.4px;top:1003px;font-size:17px;letter-spacing:0.267px">Console</span>

<svg class="ic" style="left:1321px;top:1006px;stroke:#a6a6a6;stroke-width:1.500" width="17" height="16" viewBox="0 0 17 16"><rect x="1" y="1" width="15" height="14" rx="1.500"/><path d="M6.500 5v6l4.500-3z" fill="#a6a6a6"/></svg>
<span class="t g" id="runner" style="left:1343.6px;top:1003px;font-size:17px;letter-spacing:-0.12px">Runner</span>
<svg class="ic" style="left:1424px;top:1004px;stroke:#a6a6a6;stroke-width:1.400" width="19" height="19" viewBox="0 0 19 19"><path d="M4 7.500a5.500 5.500 0 007.500 7.500z"/><path d="M7.800 11.200l3.200-3.200"/><circle cx="11.800" cy="7.200" r="1.200"/><path d="M8.500 3.800a6.500 6.500 0 016.700 6.700M9 1a9 9 0 019 9"/><path d="M3 17.500l2.500-3"/></svg>
<span class="t g" id="proxy" style="left:1446.9px;top:1003px;font-size:17px;letter-spacing:0.31px">Start Proxy</span>
<svg class="ic" style="left:1558px;top:1004px;stroke:#a6a6a6;stroke-width:1.500" width="19" height="19" viewBox="0 0 19 19"><path d="M9.500 1a8.500 8.500 0 108.500 8.500c-2 .5-3.500-.5-3.800-2.500-2.200.3-3.700-1.300-3.200-3.300C9.500 3.500 9 2.200 9.500 1z"/><circle cx="6" cy="7" r=".9" fill="#a6a6a6"/><circle cx="6.500" cy="12.500" r=".9" fill="#a6a6a6"/><circle cx="11" cy="10" r=".9" fill="#a6a6a6"/><circle cx="11.500" cy="14.500" r=".9" fill="#a6a6a6"/></svg>
<span class="t g" id="sbcookies" style="left:1581.9px;top:1003px;font-size:17px;letter-spacing:0.333px">Cookies</span>
<svg class="ic" style="left:1669px;top:1004px;stroke:#a6a6a6;stroke-width:1.500" width="18" height="19" viewBox="0 0 18 19"><path d="M1.500 8L9 1.500 16.500 8v8.500a1.500 1.500 0 01-1.500 1.500H3a1.500 1.500 0 01-1.500-1.500z"/><path d="M9 10.500v3" stroke-width="2"/></svg>
<span class="t g" id="vault" style="left:1694px;top:1003px;font-size:17px;letter-spacing:0px">Vault</span>
<svg class="ic" style="left:1758px;top:1004px;stroke:#a6a6a6;stroke-width:1.400" width="16" height="20" viewBox="0 0 16 20"><path d="M1 3.500h14M5.500 3.500v-2.500h5v2.500M2.500 3.500l.8 14a1.500 1.500 0 001.500 1.500h6.400a1.500 1.500 0 001.500-1.500l.8-14M6 7v8.500M10 7v8.500"/></svg>
<span class="t g" id="trash" style="left:1781px;top:1003px;font-size:17px;letter-spacing:0px">Trash</span>
<svg class="ic" style="left:1849px;top:1005px;stroke:#a6a6a6;stroke-width:1.500" width="18" height="18" viewBox="0 0 18 18"><rect x="1" y="1" width="16" height="16" rx="1.500"/><path d="M9 1v16"/><rect x="4" y="7.500" width="2.500" height="3" fill="#a6a6a6" stroke="none"/><rect x="11.500" y="7.500" width="2.500" height="3" fill="#a6a6a6" stroke="none"/></svg>
<svg class="ic" style="left:1890px;top:1004px;stroke:#a6a6a6;stroke-width:1.500" width="19" height="19" viewBox="0 0 19 19"><circle cx="9.500" cy="9.500" r="8.500"/><path d="M7 7.500a2.500 2.500 0 115 0c0 1.500-2.500 2-2.500 3.500M9.500 14v.3"/></svg>
</body>
</html>
